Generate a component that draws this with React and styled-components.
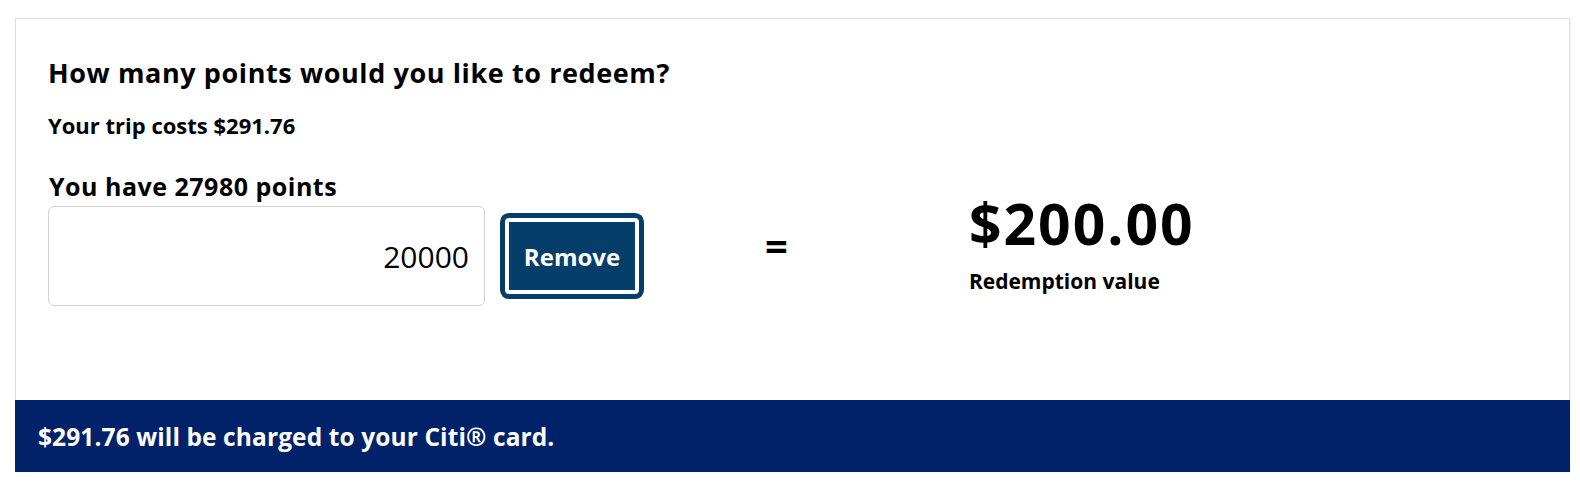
import React from "react";
import styled, { createGlobalStyle } from "styled-components";

const font = `"Open Sans", "Liberation Sans", sans-serif`;

const GlobalStyle = createGlobalStyle`
  html, body {
    margin: 0;
    padding: 0;
    background: #ffffff;
  }
  body {
    font-family: ${font};
    color: #000;
  }
`;

const Card = styled.div`
  margin: 18px 10px 13px 15px;
  box-shadow: 1px 0 2px rgba(0, 0, 0, 0.06);
`;

const Body = styled.div`
  border: 1px solid #dedede;
  border-bottom: none;
  padding: 39px 32px 94px;
`;

const Heading = styled.h2`
  margin: 0;
  font-size: 27px;
  line-height: 30px;
  font-weight: 700;
  letter-spacing: 0.6px;
`;

const Note = styled.p`
  margin: 25px 0 0;
  font-size: 22px;
  line-height: 24px;
  font-weight: 700;
`;

const Row = styled.div`
  display: flex;
  align-items: flex-start;
  margin-top: 35px;
`;

const LeftCol = styled.div`
  display: flex;
  flex-direction: column;
`;

const Label = styled.label`
  font-size: 25px;
  line-height: 28px;
  font-weight: 700;
  letter-spacing: 0.5px;
  margin-left: 1px;
`;

const InputRow = styled.div`
  display: flex;
  align-items: center;
  margin-top: 6px;
`;

const PointsInput = styled.input`
  box-sizing: border-box;
  width: 437px;
  height: 100px;
  border: 1px solid #d2d2d2;
  border-radius: 6px;
  padding: 0 15px;
  text-align: right;
  font-family: ${font};
  font-size: 30px;
  color: #000;
  background: #fff;
  outline: none;
`;

const RemoveButton = styled.button`
  box-sizing: border-box;
  width: 134px;
  height: 76px;
  margin-left: 20px;
  padding: 0;
  background: #053e68;
  color: #fff;
  border: 4px solid #fff;
  border-radius: 4px;
  box-shadow: 0 0 0 5px #053e68;
  font-family: ${font};
  font-size: 24px;
  font-weight: 700;
  cursor: pointer;
`;

const Equals = styled.div`
  margin: 50px 0 0 126px;
  font-size: 40px;
  line-height: 48px;
  font-weight: 700;
`;

const Value = styled.div`
  display: flex;
  flex-direction: column;
  margin: 25px 0 0 181px;
`;

const Amount = styled.div`
  font-size: 57px;
  line-height: 52px;
  font-weight: 700;
  letter-spacing: 2px;
`;

const ValueLabel = styled.div`
  margin-top: 20px;
  font-size: 21px;
  line-height: 24px;
  font-weight: 700;
`;

const Band = styled.div`
  background: #012169;
  color: #fff;
  height: 72px;
  display: flex;
  align-items: center;
  padding: 0 23px;
  box-sizing: border-box;
  font-size: 24.5px;
  font-weight: 700;
  letter-spacing: 0.1px;
`;

export default function App() {
  return (
    <>
      <GlobalStyle />
      <Card>
        <Body>
          <Heading>How many points would you like to redeem?</Heading>
          <Note>Your trip costs $291.76</Note>
          <Row>
            <LeftCol>
              <Label htmlFor="points">You have 27980 points</Label>
              <InputRow>
                <PointsInput id="points" defaultValue="20000" />
                <RemoveButton>Remove</RemoveButton>
              </InputRow>
            </LeftCol>
            <Equals>=</Equals>
            <Value>
              <Amount>$200.00</Amount>
              <ValueLabel>Redemption value</ValueLabel>
            </Value>
          </Row>
        </Body>
        <Band>$291.76 will be charged to your Citi® card.</Band>
      </Card>
    </>
  );
}
